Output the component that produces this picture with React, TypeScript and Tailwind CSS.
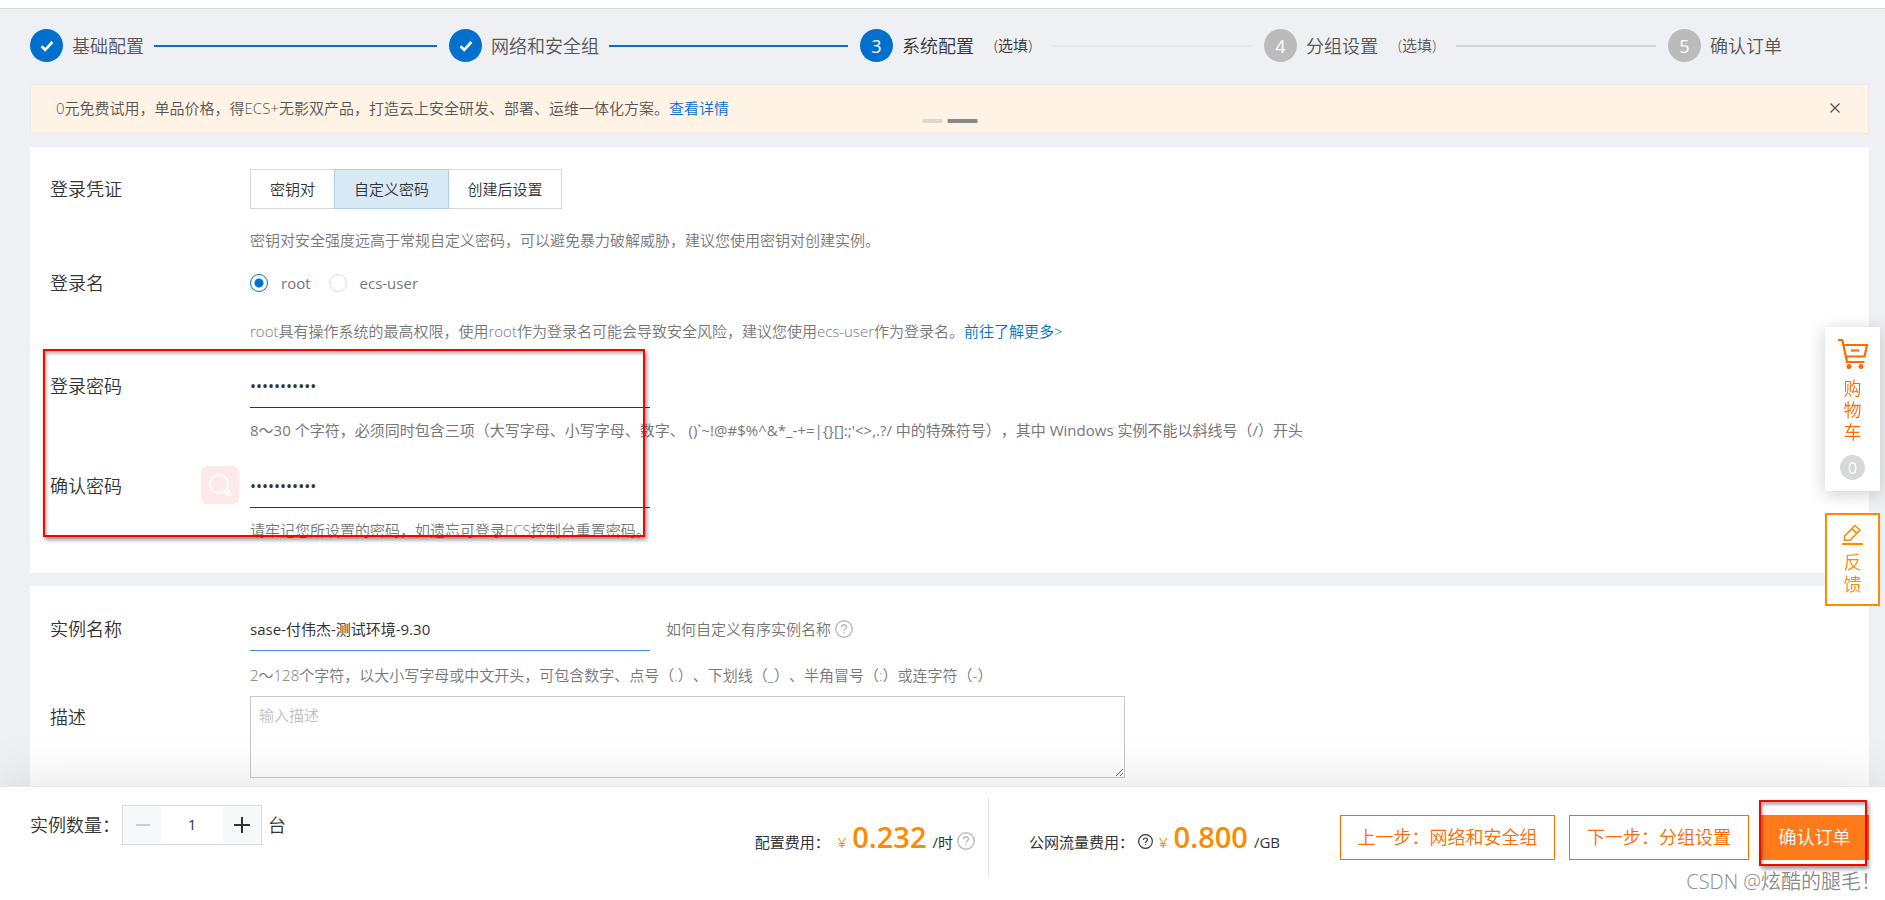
import { useState, type ReactNode } from 'react';

type Step = { title: string; optional?: boolean; state: 'done' | 'active' | 'todo'; line?: string };

const STEPS: Step[] = [
  { title: '基础配置', state: 'done', line: 'bg-[#0070cc]' },
  { title: '网络和安全组', state: 'done', line: 'bg-[#0070cc]' },
  { title: '系统配置', optional: true, state: 'active', line: 'bg-[#e6e7e8]' },
  { title: '分组设置', optional: true, state: 'todo', line: 'bg-[#d3d4d6]' },
  { title: '确认订单', state: 'todo' },
];

const CREDENTIALS = [
  { name: '密钥对', width: 'w-[85px]' },
  { name: '自定义密码', width: 'w-[115px]' },
  { name: '创建后设置', width: 'w-[114px]' },
];

function Steps() {
  return (
    <ol className="grid grid-cols-[419fr_411fr_404fr_404fr_201fr] items-center">
      {STEPS.map((step, i) => (
        <li key={step.title} className="flex items-center whitespace-nowrap">
          <span
            className={`flex size-[33px] shrink-0 items-center justify-center rounded-full text-lg font-normal text-white ${
              step.state === 'todo' ? 'bg-[#bbb]' : 'bg-[#0070cc]'
            }`}
          >
            {step.state === 'done' ? (
              <svg width="16" height="16" viewBox="0 0 16 16" fill="none" stroke="#fff" strokeWidth="2.6">
                <path d="M2.5 8.2 6.2 11.8 13.4 4" />
              </svg>
            ) : (
              i + 1
            )}
          </span>
          <span className={`ml-[9px] text-lg ${step.state === 'active' ? 'text-[#333]' : 'text-[#555]'}`}>
            {step.title}
          </span>
          {step.optional && (
            <span className={`ml-5 text-[15px] ${step.state === 'active' ? 'text-[#333]' : 'text-[#555]'}`}>
              (选填)
            </span>
          )}
          {step.line && (
            <span className={`h-[2px] flex-1 mr-3 ${step.optional ? 'ml-5' : 'ml-[10px]'} ${step.line}`} />
          )}
        </li>
      ))}
    </ol>
  );
}

function HelpIcon({ size, className }: { size: number; className: string }) {
  return (
    <svg width={size} height={size} viewBox="0 0 18 18" fill="none" stroke="currentColor" className={`shrink-0 ${className}`}>
      <circle cx="9" cy="9" r="8.2" strokeWidth="1.4" />
      <path d="M6.6 7.2c0-1.5 1-2.4 2.4-2.4s2.4.9 2.4 2.2c0 1.7-2.4 1.9-2.4 3.8" strokeWidth="1.4" />
      <circle cx="9" cy="12.9" r=".4" fill="currentColor" strokeWidth=".8" />
    </svg>
  );
}

function FormRow({ label, htmlFor, children, className = '' }: {
  label: string;
  htmlFor?: string;
  children: ReactNode;
  className?: string;
}) {
  return (
    <div className={`flex items-center ${className}`}>
      <label htmlFor={htmlFor} className="w-[200px] shrink-0 text-lg leading-6">{label}</label>
      {children}
    </div>
  );
}

function Hint({ children, className = '' }: { children: ReactNode; className?: string }) {
  return <p className={`pl-[200px] text-[15px] leading-6 text-[#777] ${className}`}>{children}</p>;
}

function SideTools() {
  return (
    <aside className="fixed right-[5px] top-[327px] z-10 flex w-[55px] flex-col gap-[22px] text-lg">
      <button className="flex h-[164px] flex-col items-center bg-white pt-3 leading-[22px] text-[#ff6a00] shadow-[0_3px_18px_rgba(0,0,0,0.2)]">
        <svg width="30" height="30" viewBox="0 0 30 30" fill="none" stroke="currentColor" strokeWidth="2.2">
          <path d="M0 1h4.3L9 23h17.5" />
          <path d="M5.5 6H29l-2.5 11.5H8.2" />
          <path d="M13 11.5h8" />
          <circle cx="11" cy="27.5" r="2.5" fill="currentColor" stroke="none" />
          <circle cx="23" cy="27.5" r="2.5" fill="currentColor" stroke="none" />
        </svg>
        <span className="mt-2 w-[18px]">购物车</span>
        <span className="mt-3 flex size-[25px] items-center justify-center rounded-full bg-[#d7d8d9] text-base font-normal text-white">0</span>
      </button>
      <button className="flex h-[93px] flex-col items-center border-2 border-[#ff8a00] bg-white pt-[9px] leading-[22px] text-[#ff8a00]">
        <svg width="21" height="21" viewBox="0 0 21 21" fill="none" stroke="currentColor" strokeWidth="1.6">
          <path d="M2.5 16.2v-4L13 1.5l5 4.5L8 16.2z" />
          <path d="m9.8 4.7 4.7 4.5" />
          <path d="M0 20h21" strokeWidth="2" />
        </svg>
        <span className="mt-[6px] w-[18px]">反馈</span>
      </button>
    </aside>
  );
}

export default function App() {
  const [credential, setCredential] = useState('自定义密码');
  const [user, setUser] = useState('root');
  const [count, setCount] = useState(1);

  const passwordInput = 'h-11 w-[400px] border-b border-[#333] bg-transparent text-base font-normal text-[#333] outline-none';
  const price = 'mx-[6px] text-[29px] leading-9 font-semibold text-[#ff8a00]';

  return (
    <div className="flex h-screen flex-col overflow-hidden bg-[#eff0f4] font-['Open_Sans','Noto_Sans_CJK_SC',sans-serif] font-[350] text-[#333] [text-spacing-trim:space-all]">
      <div className="h-[9px] shrink-0 border-b border-[#d8d9dc] bg-white" />

      <main className="min-h-0 flex-1 overflow-y-auto px-4 pl-[30px] pt-5 [scrollbar-width:none]">
        <Steps />

        {/* Promotion banner */}
        <div className="relative mt-[22px] flex h-[50px] items-center border border-[#e7e9ec] bg-[#fff3e5] px-[25px] pb-[2px] text-[15px] text-[#555]">
          <p>
            0元免费试用，单品价格，得ECS+无影双产品，打造云上安全研发、部署、运维一体化方案。
            <a href="#detail" className="text-[#0070cc]">查看详情</a>
          </p>
          <button aria-label="关闭" className="ml-auto px-[3px] text-[#555]">
            <svg width="10" height="10" viewBox="0 0 10 10" stroke="currentColor" strokeWidth="1.3">
              <path d="M.5.5l9 9M9.5.5l-9 9" />
            </svg>
          </button>
          <div className="absolute bottom-[10px] left-1/2 flex -translate-x-1/2 gap-[5px]">
            <span className="h-1 w-5 rounded-[1px] bg-[#e0d6cc]" />
            <span className="h-1 w-[30px] rounded-[1px] bg-[#888]" />
          </div>
        </div>

        {/* Login settings */}
        <section className="relative mt-[13px] bg-white px-5 pb-[31px] pt-[22px]">
          <FormRow label="登录凭证">
            <div className="flex h-10 text-[15px]">
              {CREDENTIALS.map((item, i) => (
                <button
                  key={item.name}
                  onClick={() => setCredential(item.name)}
                  className={`border ${item.width} ${i > 0 ? '-ml-px' : ''} ${
                    credential === item.name ? 'z-[1] border-[#abcfea] bg-[#d8eaf6]' : 'border-[#d9d9d9] bg-white'
                  }`}
                >
                  {item.name}
                </button>
              ))}
            </div>
          </FormRow>
          <Hint className="mt-[19px]">密钥对安全强度远高于常规自定义密码，可以避免暴力破解威胁，建议您使用密钥对创建实例。</Hint>

          <FormRow label="登录名" className="mt-[19px]">
            <div className="flex gap-[18px] text-[15px] font-normal leading-6 text-[#777]">
              {['root', 'ecs-user'].map((name) => (
                <label key={name} className="flex items-center gap-[13px]">
                  <input
                    type="radio"
                    name="login-user"
                    checked={user === name}
                    onChange={() => setUser(name)}
                    className="size-[18px] appearance-none rounded-full border border-[#ddd] bg-white checked:border-[#0070cc] checked:bg-[radial-gradient(circle,#0070cc_4px,#fff_5px)]"
                  />
                  {name}
                </label>
              ))}
            </div>
          </FormRow>
          <Hint className="mt-6">
            root具有操作系统的最高权限，使用root作为登录名可能会导致安全风险，建议您使用ecs-user作为登录名。
            <a href="#more" className="text-[#0070cc]">前往了解更多&gt;</a>
          </Hint>

          <FormRow label="登录密码" htmlFor="password" className="mt-[21px]">
            <input id="password" type="password" defaultValue="Passw0rd!23" className={passwordInput} />
          </FormRow>
          <Hint className="mt-[10px] font-normal">
            {"8～30 个字符，必须同时包含三项（大写字母、小写字母、数字、 ()`~!@#$%^&*_-+=|{}[]:;'<>,.?/ 中的特殊符号），其中 Windows 实例不能以斜线号（/）开头"}
          </Hint>

          <FormRow label="确认密码" htmlFor="confirm" className="mt-[22px]">
            <input id="confirm" type="password" defaultValue="Passw0rd!23" className={passwordInput} />
          </FormRow>
          <Hint className="mt-[10px]">请牢记您所设置的密码，如遗忘可登录ECS控制台重置密码。</Hint>

          {/* Floating search button */}
          <button aria-label="搜索" className="absolute left-[171px] top-[319px] flex size-[38px] items-center justify-center rounded-md bg-[#fde9ea]">
            <svg width="24" height="24" viewBox="0 0 24 24" fill="none" stroke="#fff" strokeWidth="1.8">
              <circle cx="11" cy="11" r="9" />
              <path d="m16.5 18 4 4c1.5 1 3-.5 2-2l-3.5-4" />
            </svg>
          </button>
          <div className="pointer-events-none absolute left-[13px] top-[202px] h-[188px] w-[602px] border-2 border-[#f00] shadow-[2px_3px_4px_rgba(0,0,0,0.4),inset_2px_3px_3px_rgba(0,0,0,0.25)]" />
        </section>

        {/* Instance settings */}
        <section className="mt-[13px] bg-white px-5 pb-6 pt-[21px]">
          <FormRow label="实例名称" htmlFor="instance-name">
            <input
              id="instance-name"
              defaultValue="sase-付伟杰-测试环境-9.30"
              className="h-11 w-[400px] border-b border-[#3a8fd9] bg-transparent text-[15px] font-normal outline-none"
            />
            <a href="#naming" className="ml-4 flex items-center gap-1 text-[15px] text-[#777]">
              如何自定义有序实例名称
              <HelpIcon size={18} className="text-[#bbb]" />
            </a>
          </FormRow>
          <Hint className="mt-3">2～128个字符，以大小写字母或中文开头，可包含数字、点号（.）、下划线（_）、半角冒号（:）或连字符（-）</Hint>
          <div className="mt-[9px] flex items-start">
            <label htmlFor="description" className="w-[200px] shrink-0 pt-[9px] text-lg leading-6">描述</label>
            <textarea
              id="description"
              placeholder="输入描述"
              className="h-[82px] w-[875px] border border-[#c8c8c8] px-2 py-[6px] text-[15px] leading-6 placeholder:text-[#bfbfbf]"
            />
          </div>
        </section>
      </main>

      <footer className="relative flex h-[114px] shrink-0 items-start border-t border-[#e6e6e6] bg-white pl-[30px] pr-4 shadow-[0_0_60px_rgba(0,0,0,0.12)]">
        <div className="mt-[18px] flex items-center text-lg">
          <label htmlFor="count">实例数量：</label>
          <div className="ml-[2px] mr-[6px] flex h-10 border border-[#d9d9d9] p-px">
            <button aria-label="减少" onClick={() => setCount(Math.max(1, count - 1))} className="flex w-[37px] items-center justify-center bg-[#f7f8fa] text-[#ccc]">
              <svg width="16" height="16" viewBox="0 0 16 16" stroke="currentColor" strokeWidth="2"><path d="M1 8h14" /></svg>
            </button>
            <input
              id="count"
              value={count}
              onChange={(e) => setCount(Number(e.target.value) || 1)}
              className="w-[62px] text-center text-[15px] font-normal outline-none"
            />
            <button aria-label="增加" onClick={() => setCount(count + 1)} className="flex w-[37px] items-center justify-center bg-[#f7f8fa]">
              <svg width="16" height="16" viewBox="0 0 16 16" stroke="currentColor" strokeWidth="2"><path d="M0 8h16M8 0v16" /></svg>
            </button>
          </div>
          台
        </div>

        <div className="mt-[10px] ml-auto flex h-20 items-center whitespace-nowrap text-[15px]">
          <div className="flex h-full items-center border-r border-[#e6e6e6] pr-[13px]">
            <span className="flex items-baseline font-normal">
              配置费用：
              <span className="ml-2 text-[#ff8a00]">¥</span>
              <span className={price}>0.232</span>
              /时
            </span>
            <HelpIcon size={18} className="ml-1 mt-2 text-[#bbb]" />
          </div>
          <div className="flex h-full items-center pl-10">
            <span className="flex items-baseline font-normal">
              公网流量费用：
              <HelpIcon size={15} className="ml-1 mr-[6px] mt-2 self-center" />
              <span className="text-[#ff8a00]">¥</span>
              <span className={price}>0.800</span>
              /GB
            </span>
          </div>
          <div className="relative ml-[60px] flex text-lg">
            <button className="h-[45px] w-[215px] border border-[#ff6a00] text-[#ff6a00]">上一步：网络和安全组</button>
            <button className="ml-[14px] h-[45px] w-[180px] border border-[#ff6a00] text-[#ff6a00]">下一步：分组设置</button>
            <button className="ml-[11px] h-[45px] w-[109px] bg-[#ff7a1a] text-white">确认订单</button>
            <div className="pointer-events-none absolute -top-[15px] right-[2px] h-[66px] w-[108px] border-2 border-[#f00] shadow-[2px_3px_4px_rgba(0,0,0,0.4),inset_2px_3px_3px_rgba(0,0,0,0.3)]" />
          </div>
        </div>

        <span className="absolute bottom-1 right-1 whitespace-nowrap text-[20px] leading-7 text-[#8c8c8c]">CSDN @炫酷的腿毛！</span>
      </footer>

      <SideTools />
    </div>
  );
}
